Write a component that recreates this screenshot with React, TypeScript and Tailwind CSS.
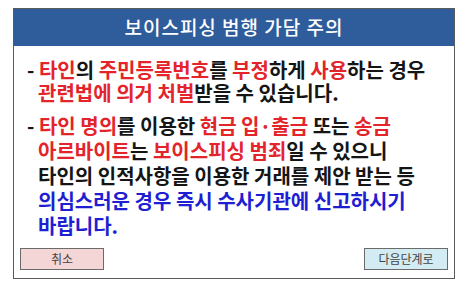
export default function App() {
  const R = "text-[#e3242b]";
  return (
    <div
      className="w-[471px] h-[287px] bg-white pt-[8px] pl-[13px]"
      style={{ fontFamily: '"Noto Sans CJK KR", "Noto Sans", sans-serif' }}
    >
      <div className="w-[442px] h-[271px] border border-[#5a5a5a] flex flex-col">
        {/* header */}
        <div className="h-[37px] bg-[#2f5d9c] flex items-center justify-center text-white text-[19px] font-medium tracking-[1px]">
          보이스피싱 범행 가담 주의
        </div>

        {/* body */}
        <div className="flex-1 pl-[24px] pt-[12px] text-[20px] font-bold leading-[23px] text-[#151515]">
          <p className="-indent-[11px]">
            -&nbsp;<span className={R}>타인</span>의 <span className={R}>주민등록번호</span>를{" "}
            <span className={R}>부정</span>하게 <span className={R}>사용</span>하는 경우
            <br />
            <span className={R}>관련법에 의거 처벌</span>받을 수 있습니다.
          </p>
          <p className="-indent-[11px] mt-[9px] leading-[25px]">
            -&nbsp;<span className={R}>타인 명의</span>를 이용한 <span className={R}>현금 입·출금</span> 또는{" "}
            <span className={R}>송금</span>
            <br />
            <span className={R}>아르바이트</span>는 <span className={R}>보이스피싱 범죄</span>일 수 있으니
            <br />
            타인의 인적사항을 이용한 거래를 제안 받는 등
            <br />
            <span className="text-[#1e1ed2]">
              의심스러운 경우 즉시 수사기관에 신고하시기
              <br />
              바랍니다.
            </span>
          </p>
        </div>

        {/* buttons */}
        <div className="flex justify-between px-[6px] pb-[8px]">
          <button className="w-[84px] h-[22px] bg-[#f5d6d6] border border-[#6b6b6b] text-[12px] text-[#444]">
            취소
          </button>
          <button className="w-[84px] h-[22px] bg-[#d3ebf2] border border-[#6b6b6b] text-[12px] text-[#444]">
            다음단계로
          </button>
        </div>
      </div>
    </div>
  );
}
